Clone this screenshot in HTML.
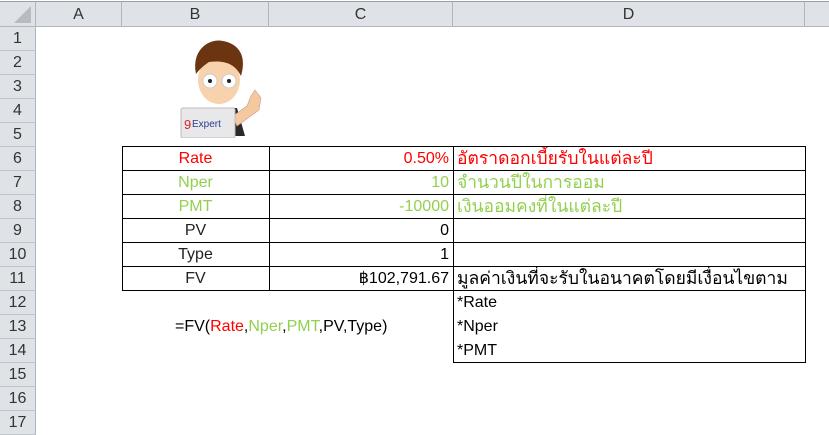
<!DOCTYPE html>
<html><head><meta charset="utf-8"><style>
*{margin:0;padding:0;box-sizing:border-box}
body{width:829px;height:427px;overflow:hidden;background:#fff;font-family:"Liberation Sans","DejaVu Sans",sans-serif;position:relative;font-size:16px;color:#000}
.h{position:absolute;background:#dfe3e8;color:#333}
.ch{top:1px;height:26px;border-top:1px solid #9aa0a8;border-bottom:1px solid #b0b6be;border-right:1px solid #b0b6be;text-align:center;line-height:25px;font-size:16px}
.rh{left:0;width:36px;height:24px;border-bottom:1px solid #c0c5cc;border-right:1px solid #b0b6be;text-align:center;line-height:24px;font-size:16px}
.c{position:absolute;height:24px;line-height:23px;white-space:nowrap;overflow:hidden}
.t{font-size:17.5px}
.b{border:1px solid #000}
.r{color:#ff0000}.g{color:#92d050}
</style></head><body>
<div class="h ch" style="left:0;width:36px"><svg width="36" height="25" style="position:absolute;left:0;top:0"><polygon points="31,4 31,21 14,21" fill="#b8bcc2"/></svg></div>
<div class="h ch" style="left:36px;width:86px">A</div>
<div class="h ch" style="left:122px;width:147px">B</div>
<div class="h ch" style="left:269px;width:184px">C</div>
<div class="h ch" style="left:453px;width:352px">D</div>
<div class="h ch" style="left:805px;width:24px;border-right:none"></div>
<div class="h rh" style="top:27px">1</div>
<div class="h rh" style="top:51px">2</div>
<div class="h rh" style="top:75px">3</div>
<div class="h rh" style="top:99px">4</div>
<div class="h rh" style="top:123px">5</div>
<div class="h rh" style="top:147px">6</div>
<div class="h rh" style="top:171px">7</div>
<div class="h rh" style="top:195px">8</div>
<div class="h rh" style="top:219px">9</div>
<div class="h rh" style="top:243px">10</div>
<div class="h rh" style="top:267px">11</div>
<div class="h rh" style="top:291px">12</div>
<div class="h rh" style="top:315px">13</div>
<div class="h rh" style="top:339px">14</div>
<div class="h rh" style="top:363px">15</div>
<div class="h rh" style="top:387px">16</div>
<div class="h rh" style="top:411px">17</div>

<svg style="position:absolute;left:175px;top:38px" width="90" height="100">
<path d="M22 70 L8 98 L70 98 L62 70 Z" fill="#2a2a2a"/>
<path d="M58 78 L72 68 L76 58 L80 52 L86 60 L84 72 L62 88 Z" fill="#f5c9a0" stroke="#c98" stroke-width="0.6"/>
<path d="M36 64 L44 72 L52 64 L48 76 L40 76 Z" fill="#fff"/>
<circle cx="44" cy="74" r="2" fill="#1a7fd0"/>
<ellipse cx="44" cy="42" rx="21" ry="24" fill="#f7d2ad"/>
<path d="M21 36 C16 10 36 0 48 3 C64 6 72 18 66 38 C60 26 50 22 34 24 C28 28 24 32 21 36 Z" fill="#6b3512"/>
<circle cx="35" cy="43" r="7" fill="#fff" stroke="#ccc"/><circle cx="54" cy="43" r="7" fill="#fff" stroke="#ccc"/>
<circle cx="35" cy="43" r="2" fill="#222"/><circle cx="54" cy="43" r="2" fill="#222"/>
<rect x="6" y="70" width="54" height="30" rx="2" fill="#e8e8ea" stroke="#bbb"/>
<text x="9" y="91" font-size="13" fill="#d22" font-family="Liberation Sans">9</text>
<text x="17" y="89" font-size="10" fill="#2b3d8f" font-family="Liberation Sans">Expert</text>
</svg>

<div class="c b" style="left:122px;top:146px;width:148px;height:145px"></div>
<div class="c b" style="left:269px;top:146px;width:185px;height:145px"></div>
<div class="c b" style="left:453px;top:146px;width:353px;height:145px"></div>
<div style="position:absolute;left:122px;top:170px;width:684px;border-top:1px solid #000"></div>
<div style="position:absolute;left:122px;top:194px;width:684px;border-top:1px solid #000"></div>
<div style="position:absolute;left:122px;top:218px;width:684px;border-top:1px solid #000"></div>
<div style="position:absolute;left:122px;top:242px;width:684px;border-top:1px solid #000"></div>
<div style="position:absolute;left:122px;top:266px;width:684px;border-top:1px solid #000"></div>
<div class="b" style="position:absolute;left:453px;top:290px;width:353px;height:73px"></div>

<div class="c r" style="left:122px;top:147px;width:147px;text-align:center">Rate</div>
<div class="c g" style="left:122px;top:171px;width:147px;text-align:center">Nper</div>
<div class="c g" style="left:122px;top:195px;width:147px;text-align:center">PMT</div>
<div class="c" style="left:122px;top:219px;width:147px;text-align:center;color:#222">PV</div>
<div class="c" style="left:122px;top:243px;width:147px;text-align:center;color:#222">Type</div>
<div class="c" style="left:122px;top:267px;width:147px;text-align:center;color:#222">FV</div>
<div class="c r" style="left:269px;top:147px;width:180px;text-align:right">0.50%</div>
<div class="c g" style="left:269px;top:171px;width:180px;text-align:right">10</div>
<div class="c g" style="left:269px;top:195px;width:180px;text-align:right">-10000</div>
<div class="c" style="left:269px;top:219px;width:180px;text-align:right">0</div>
<div class="c" style="left:269px;top:243px;width:180px;text-align:right">1</div>
<div class="c" style="left:269px;top:267px;width:180px;text-align:right">฿102,791.67</div>
<div class="c r t" style="left:457px;top:147px;width:346px">อัตราดอกเบี้ยรับในแต่ละปี</div>
<div class="c g t" style="left:457px;top:171px;width:346px">จำนวนปีในการออม</div>
<div class="c g t" style="left:457px;top:195px;width:346px">เงินออมคงที่ในแต่ละปี</div>
<div class="c t" style="left:457px;top:267px;width:346px">มูลค่าเงินที่จะรับในอนาคตโดยมีเงื่อนไขตาม</div>
<div class="c" style="left:457px;top:291px">*Rate</div>
<div class="c" style="left:457px;top:315px">*Nper</div>
<div class="c" style="left:457px;top:339px">*PMT</div>
<div class="c" style="left:175px;top:315px">=FV(<span class="r">Rate</span>,<span class="g">Nper</span>,<span class="g">PMT</span>,PV,Type)</div>
</body></html>
